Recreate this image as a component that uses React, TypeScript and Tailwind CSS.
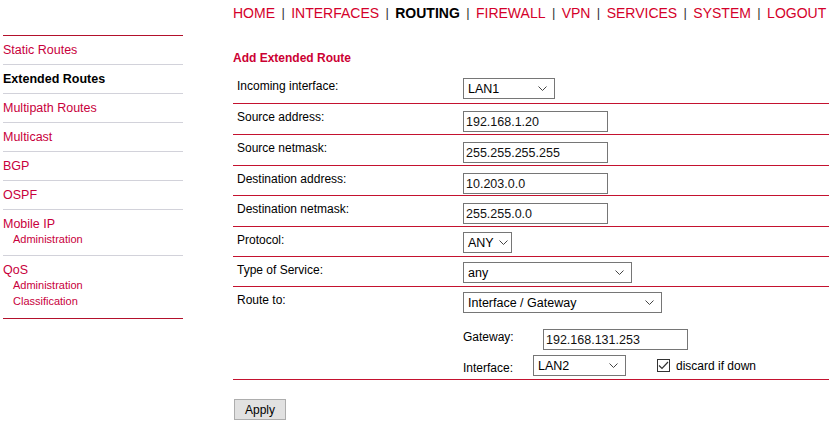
import React from 'react';

const navItems = ['HOME', 'INTERFACES', 'ROUTING', 'FIREWALL', 'VPN', 'SERVICES', 'SYSTEM', 'LOGOUT'];

interface SideItem {
  label: string;
  active?: boolean;
  subs?: string[];
}

const sideItems: SideItem[] = [
  { label: 'Static Routes' },
  { label: 'Extended Routes', active: true },
  { label: 'Multipath Routes' },
  { label: 'Multicast' },
  { label: 'BGP' },
  { label: 'OSPF' },
  { label: 'Mobile IP', subs: ['Administration'] },
  { label: 'QoS', subs: ['Administration', 'Classification'] },
];

function Chevron({ right = 'right-[8px]' }: { right?: string }) {
  return (
    <svg width="9" height="5" viewBox="0 0 9 5" className={`pointer-events-none absolute ${right} top-[8px]`}>
      <path d="M0.5 0.5 L4.5 4.5 L8.5 0.5" fill="none" stroke="#444" strokeWidth="1" />
    </svg>
  );
}

function Select({ value, width, right }: { value: string; width: string; right?: string }) {
  return (
    <div className={`relative h-[21px] ${width}`}>
      <div className="h-full w-full border border-[#767676] bg-white pl-[4px] pt-[1px] text-[12.5px] leading-[19px] text-black">
        {value}
      </div>
      <Chevron right={right} />
    </div>
  );
}

function TextInput({ value, width = 'w-[145px]' }: { value: string; width?: string }) {
  return (
    <input
      readOnly
      value={value}
      className={`h-[21px] ${width} border border-[#767676] bg-white px-[2px] pt-[1px] text-[12.5px] text-[#111] outline-none`}
    />
  );
}

function Row({ label, height, children }: { label: string; height: string; children: React.ReactNode }) {
  return (
    <div className={`flex ${height} border-b border-[#c4122f] pt-[5px]`}>
      <div className="w-[230px] pl-[4px] pt-[1px] text-[12px] leading-[14px]">{label}</div>
      <div>{children}</div>
    </div>
  );
}

export default function App() {
  return (
    <div className="flex h-[425px] w-[829px] bg-white font-['Liberation_Sans',Arial,sans-serif] text-black">
      {/* sidebar */}
      <aside className="ml-[3px] mt-[35px] w-[180px] border-t border-[#b3112c]">
        {sideItems.map((item, i) => {
          const last = i === sideItems.length - 1;
          return (
            <div
              key={item.label}
              className={`pt-[7px] ${item.subs ? (last ? 'pb-[9px]' : 'pb-[8px]') : 'pb-[7px]'} ${
                last ? 'border-b border-[#b3112c]' : 'border-b border-[#d2d2da]'
              }`}
            >
              <div
                className={`text-[12.5px] leading-[14px] ${
                  item.active ? 'font-bold text-black' : 'text-[#c8003c]'
                }`}
              >
                {item.label}
              </div>
              {item.subs &&
                item.subs.map((s) => (
                  <div key={s} className="pl-[10px] text-[11px] leading-[16px] text-[#c8003c]">
                    {s}
                  </div>
                ))}
            </div>
          );
        })}
      </aside>

      {/* main */}
      <main className="ml-[50px] flex-1">
        <nav className="flex h-[26px] items-center whitespace-nowrap text-[14px] leading-[26px] text-[#d4002a]">
          {navItems.map((n, i) => (
            <React.Fragment key={n}>
              {i > 0 && <span className="mx-[6.4px] text-[13px] text-[#333]">|</span>}
              <span className={n === 'ROUTING' ? 'font-bold text-black' : ''}>{n}</span>
            </React.Fragment>
          ))}
        </nav>

        <h2 className="mt-[25px] mb-[8px] text-[12px] font-bold leading-[14px] text-[#cc0033]">
          Add Extended Route
        </h2>

        <div>
          <Row label="Incoming interface:" height="h-[31px]">
            <Select value="LAN1" width="w-[92px]" />
          </Row>
          <Row label="Source address:" height="h-[31px]">
            <TextInput value="192.168.1.20" />
          </Row>
          <Row label="Source netmask:" height="h-[31px]">
            <TextInput value="255.255.255.255" />
          </Row>
          <Row label="Destination address:" height="h-[30px]">
            <TextInput value="10.203.0.0" />
          </Row>
          <Row label="Destination netmask:" height="h-[31px]">
            <TextInput value="255.255.0.0" />
          </Row>
          <Row label="Protocol:" height="h-[30px]">
            <Select value="ANY" width="w-[49px]" right="right-[4px]" />
          </Row>
          <Row label="Type of Service:" height="h-[30px]">
            <Select value="any" width="w-[169px]" />
          </Row>
          <Row label="Route to:" height="h-[93px]">
            <Select value="Interface / Gateway" width="w-[199px]" />
            <div className="mt-[16px] flex items-center">
              <span className="w-[80px] -translate-y-[3px] text-[12px] leading-[14px]">Gateway:</span>
              <TextInput value="192.168.131.253" />
            </div>
            <div className="mt-[5px] flex items-center">
              <span className="w-[70px] translate-y-[2px] text-[12px] leading-[14px]">Interface:</span>
              <Select value="LAN2" width="w-[93px]" />
              <span className="ml-[31px] flex h-[13px] w-[13px] items-center justify-center border border-[#333] bg-white">
                <svg width="11" height="9" viewBox="0 0 11 9">
                  <path d="M1 4.5 L4 7.5 L10 1" fill="none" stroke="#333" strokeWidth="1.2" />
                </svg>
              </span>
              <span className="ml-[6px] text-[12px] leading-[14px]">discard if down</span>
            </div>
          </Row>
        </div>

        <button className="ml-[1px] mt-[19px] h-[21px] w-[52px] border border-[#adadad] bg-[#e1e1e1] text-[12px] text-black">
          Apply
        </button>
      </main>
    </div>
  );
}
